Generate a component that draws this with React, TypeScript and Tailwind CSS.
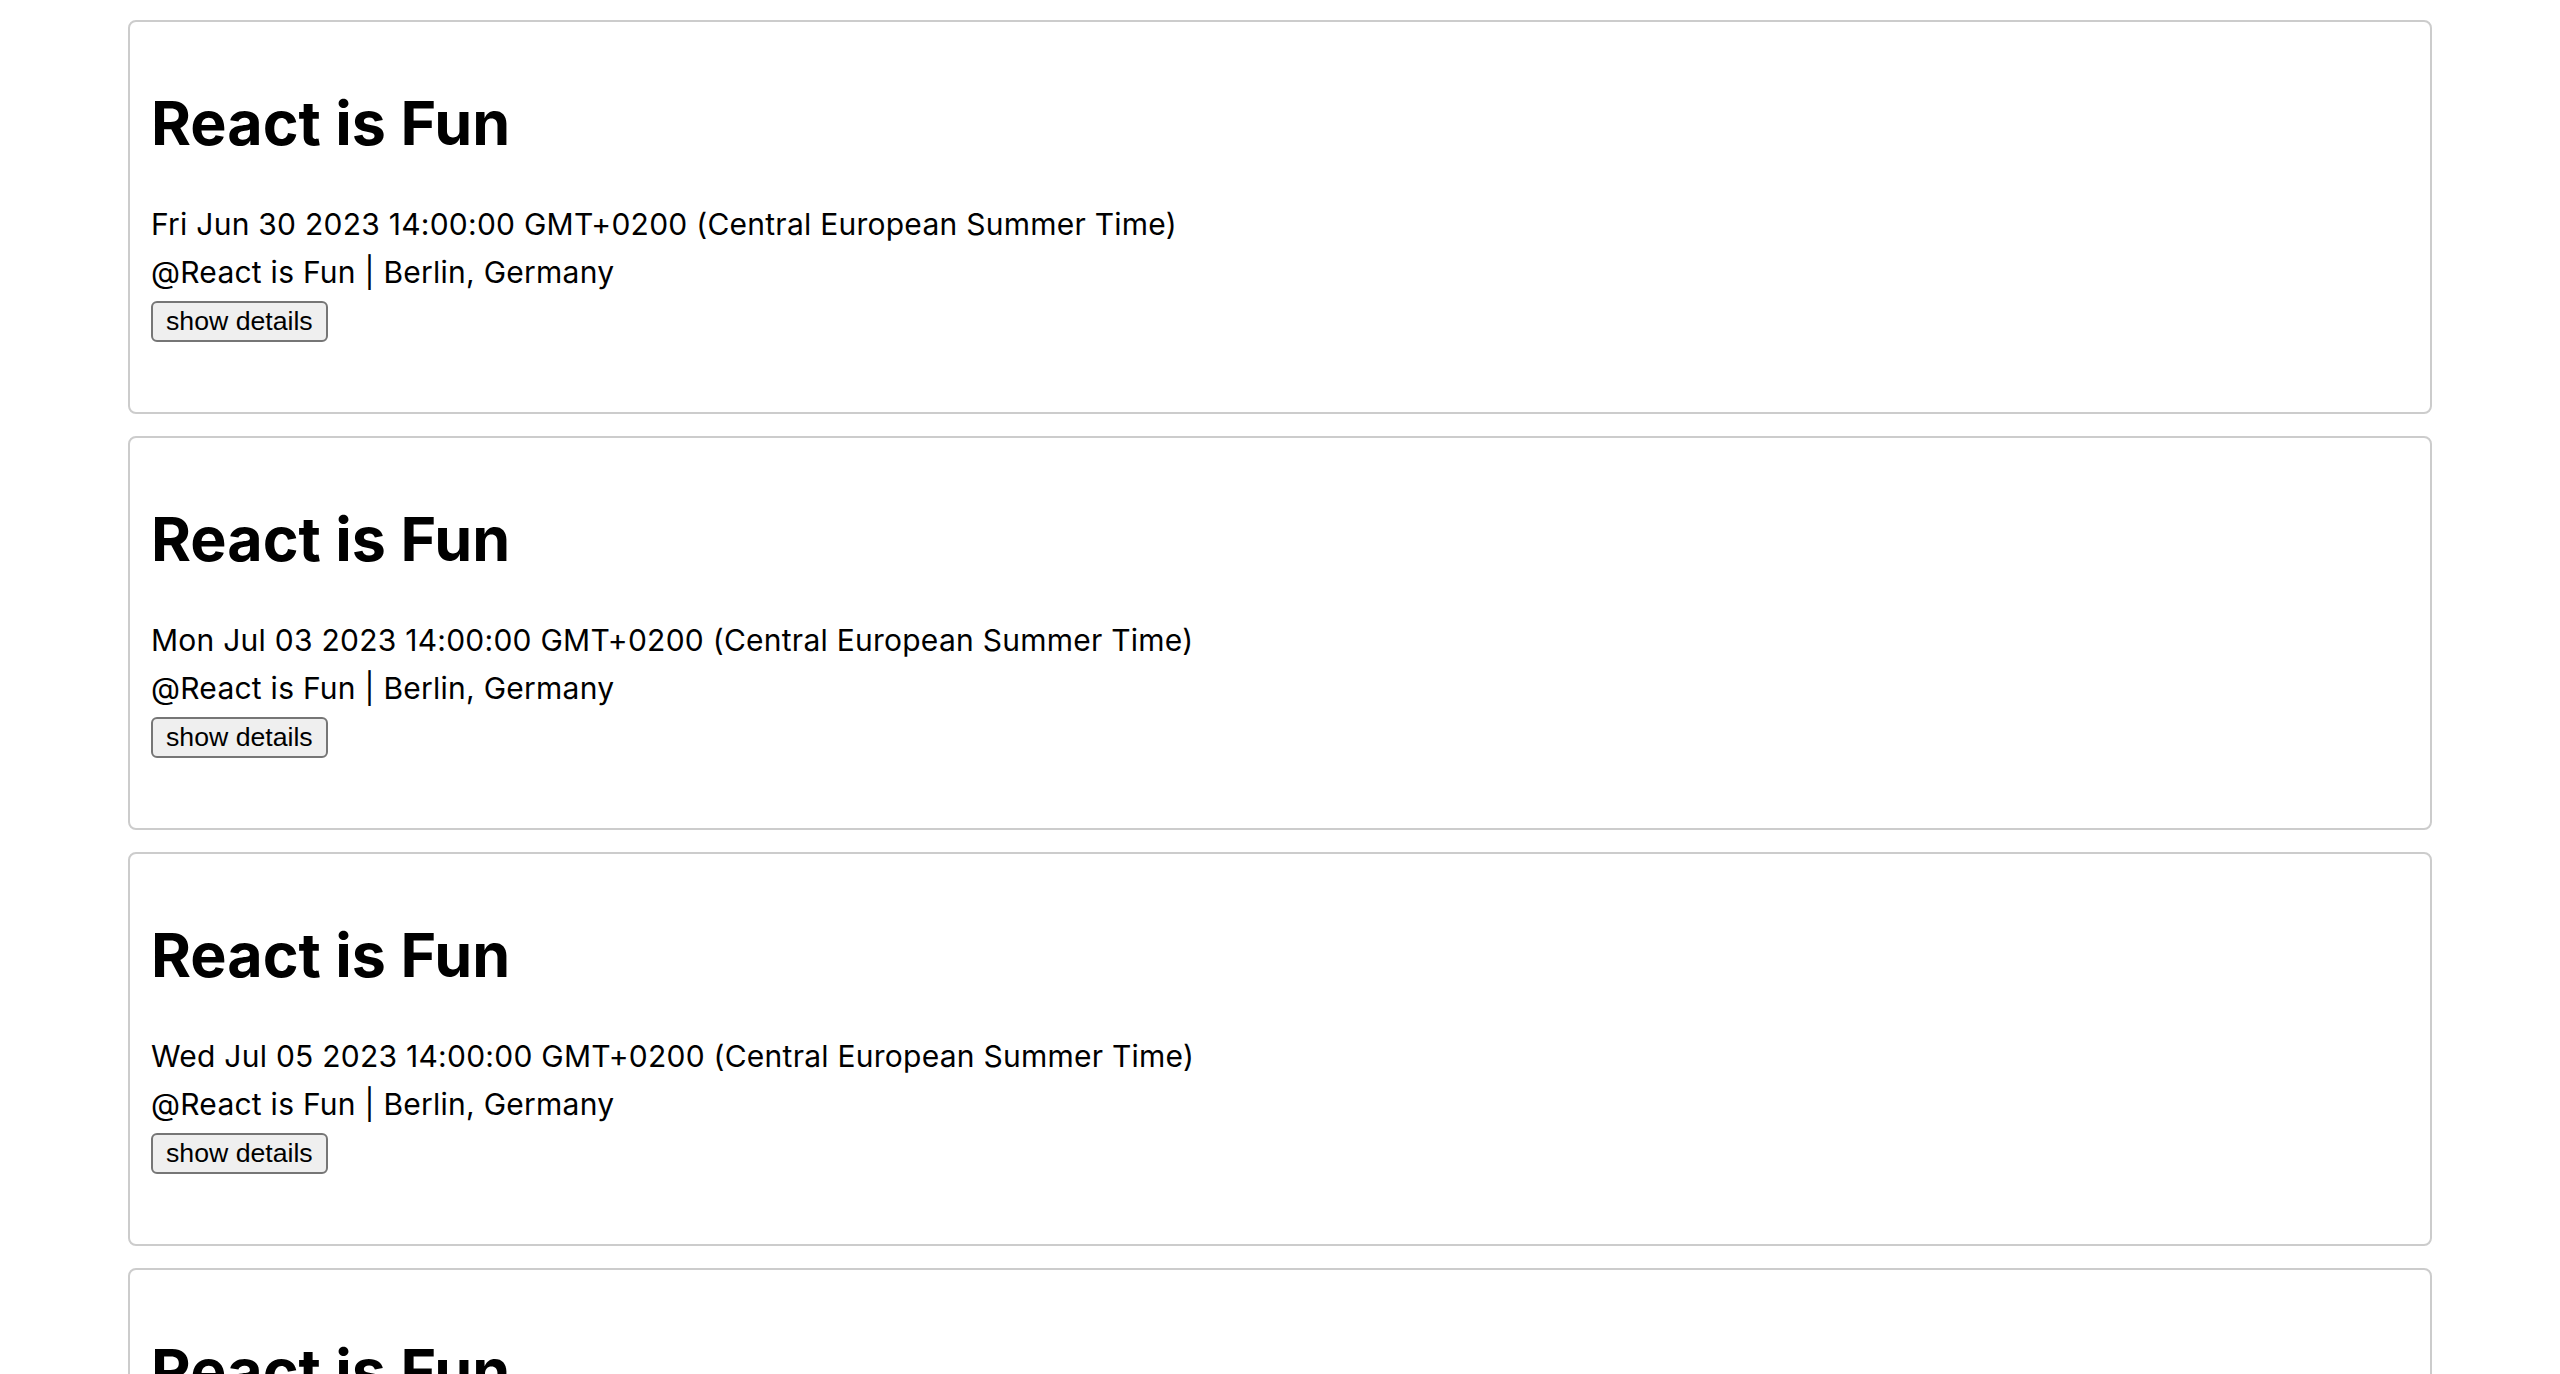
import React from "react";

type Meetup = {
  id: number;
  title: string;
  date: string;
  group: string;
  location: string;
};

const meetups: Meetup[] = [
  { id: 1, title: "React is Fun", date: "Fri Jun 30 2023 14:00:00 GMT+0200 (Central European Summer Time)", group: "React is Fun", location: "Berlin, Germany" },
  { id: 2, title: "React is Fun", date: "Mon Jul 03 2023 14:00:00 GMT+0200 (Central European Summer Time)", group: "React is Fun", location: "Berlin, Germany" },
  { id: 3, title: "React is Fun", date: "Wed Jul 05 2023 14:00:00 GMT+0200 (Central European Summer Time)", group: "React is Fun", location: "Berlin, Germany" },
  { id: 4, title: "React is Fun", date: "Fri Jul 07 2023 14:00:00 GMT+0200 (Central European Summer Time)", group: "React is Fun", location: "Berlin, Germany" },
];

function Event({ event }: { event: Meetup }) {
  return (
    <li className="mb-[22px] rounded-[8px] border-2 border-[#cccccc] bg-white px-[21px] pt-[64px] pb-[70px]">
      <h1 className="mb-[40px] text-[61px] font-bold leading-[74px] text-black">{event.title}</h1>
      <p className="text-[30px] leading-[48px] tracking-[0.25px] text-black">{event.date}</p>
      <p className="text-[30px] leading-[48px] tracking-[0.25px] text-black">
        @{event.group} | {event.location}
      </p>
      <button
        className="mt-[5px] rounded-[6px] border-2 border-[#767676] bg-[#efefef] px-[13px] py-[3px] text-[26.67px] leading-[31px] text-black"
        style={{ fontFamily: '"Liberation Sans", Arial, sans-serif' }}
      >
        show details
      </button>
    </li>
  );
}

export default function App() {
  return (
    <div className="min-h-screen bg-white pt-[20px] font-['Inter',sans-serif]">
      <ul className="mx-auto w-[90%] list-none">
        {meetups.map((m) => (
          <Event key={m.id} event={m} />
        ))}
      </ul>
    </div>
  );
}
